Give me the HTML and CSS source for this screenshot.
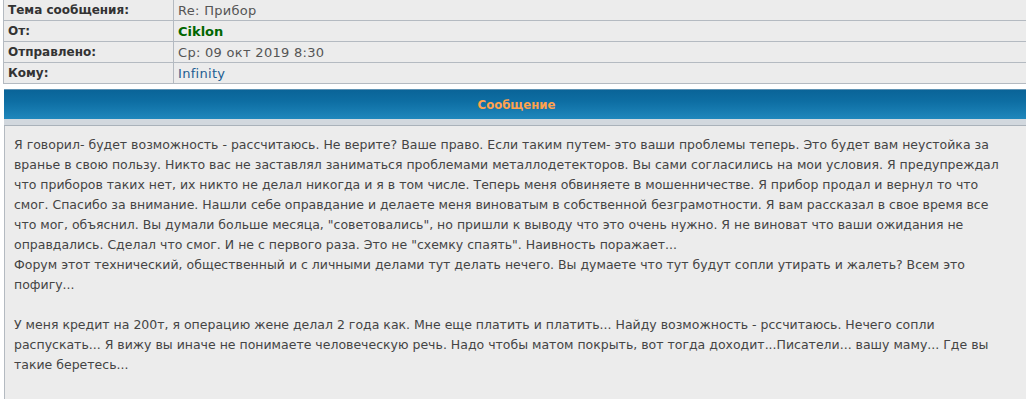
FILE: index.html
```html
<!DOCTYPE html>
<html lang="ru">
<head>
    <meta charset="UTF-8">
    <title>Сообщение</title>
    <link rel="stylesheet" href="styles.css">
</head>
<body>
    <div class="page">
        <table class="info">
            <tr>
                <td class="label">Тема сообщения:</td>
                <td class="value">Re: Прибор</td>
            </tr>
            <tr>
                <td class="label">От:</td>
                <td class="value"><span class="author">Ciklon</span></td>
            </tr>
            <tr>
                <td class="label">Отправлено:</td>
                <td class="value">Ср: 09 окт 2019 8:30</td>
            </tr>
            <tr>
                <td class="label">Кому:</td>
                <td class="value"><a href="#" class="user-link">Infinity</a></td>
            </tr>
        </table>

        <div class="post">
            <div class="post-head">Сообщение</div>
            <div class="post-strip"></div>
            <div class="post-body">
                Я говорил- будет возможность - рассчитаюсь. Не верите? Ваше право. Если таким путем- это ваши проблемы теперь. Это будет вам неустойка за вранье в свою пользу. Никто вас не заставлял заниматься проблемами металлодетекторов. Вы сами согласились на мои условия. Я предупреждал что приборов таких нет, их никто не делал никогда и я в том числе. Теперь меня обвиняете в мошенничестве. Я прибор продал и вернул то что смог. Спасибо за внимание. Нашли себе оправдание и делаете меня виноватым в собственной безграмотности. Я вам рассказал в свое время все что мог, объяснил. Вы думали больше месяца, "советовались", но пришли к выводу что это очень нужно. Я не виноват что ваши ожидания не оправдались. Сделал что смог. И не с первого раза. Это не "схемку спаять". Наивность поражает...<br>
                Форум этот технический, общественный и с личными делами тут делать нечего. Вы думаете что тут будут сопли утирать и жалеть? Всем это пофигу...<br>
                <br>
                У меня кредит на 200т, я операцию жене делал 2 года как. Мне еще платить и платить... Найду возможность - рссчитаюсь. Нечего сопли распускать... Я вижу вы иначе не понимаете человеческую речь. Надо чтобы матом покрыть, вот тогда доходит...Писатели... вашу маму... Где вы такие беретесь...
            </div>
        </div>
    </div>
</body>
</html>
```

FILE: styles.css
```css
body {
    margin: 0;
    background: #fff;
    font-family: "DejaVu Sans", Verdana, sans-serif;
    font-size: 12px;
    color: #333;
    overflow: hidden;
}

.page {
    margin-left: 3px;
    width: 1030px;
}

.info {
    width: 100%;
    border-collapse: collapse;
    border-left: 1px solid #b4bac1;
}
.info td {
    background: #ececec;
    height: 20px;
    padding: 0 4px;
    border-bottom: 1px solid #b4bac1;
    vertical-align: middle;
}
.info .label {
    width: 161px;
    font-weight: bold;
    color: #333;
    border-right: 1px solid #b4bac1;
}
.info .value {
    color: #555;
    font-size: 13px;
    letter-spacing: 0.3px;
    padding-left: 4px;
}
.author {
    color: #006600;
    font-weight: bold;
    letter-spacing: 0;
}
.user-link {
    color: #1e5e92;
    text-decoration: none;
}

.post {
    margin-top: 5px;
    margin-left: 1px;
}
.post-head {
    height: 29px;
    line-height: 29px;
    border-top: 1px solid #5f93b4;
    background: linear-gradient(#0a6498, #0e6ea3 40%, #1f87bc);
    color: #ffa24e;
    font-family: "DejaVu Sans Condensed", "DejaVu Sans", sans-serif;
    font-size: 13px;
    font-weight: bold;
    text-align: center;
    padding-right: 4px;
}
.post-strip {
    height: 6px;
    background: #d2d8de;
    border-bottom: 1px solid #aab2ba;
}
.post-body {
    box-sizing: border-box;
    min-height: calc(100vh - 126px);
    background: #ececec;
    border-left: 1px solid #b4bac1;
    padding: 9px 33px 10px 9px;
    font-size: 12.5px;
    line-height: 20px;
    color: #444;
}
```
